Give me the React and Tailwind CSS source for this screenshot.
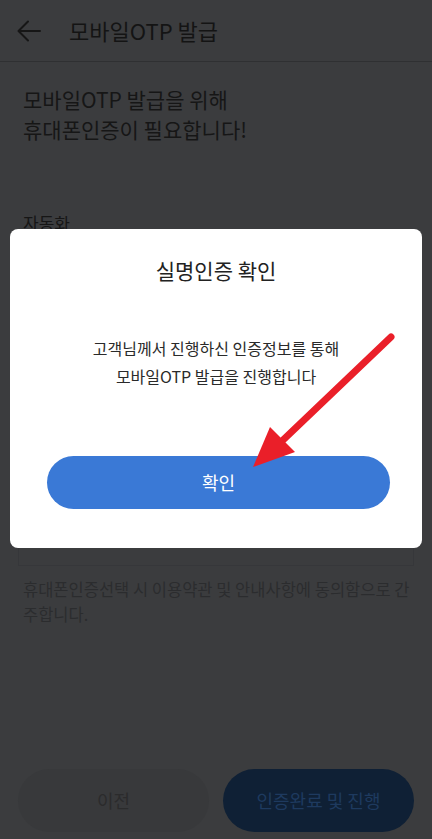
import React from "react";

const font = { fontFamily: '"Noto Sans CJK KR", "Noto Sans", sans-serif' };

function Header() {
  return (
    <div className="h-[62px] flex items-center border-b border-[#2f3032]">
      <svg
        width="26"
        height="26"
        viewBox="0 0 26 26"
        className="ml-[16px]"
        fill="none"
        stroke="#161616"
        strokeWidth="2"
        strokeLinecap="round"
        strokeLinejoin="round"
      >
        <path d="M24 13H2.5M12 3.5 2.5 13l9.5 9.5" />
      </svg>
      <h1 className="ml-[27px] text-[22px] text-[#141414]">모바일OTP 발급</h1>
    </div>
  );
}

function Modal() {
  return (
    <div className="absolute inset-0">
      <div className="mx-[10px] mt-[229px] bg-white rounded-[8px] flex flex-col items-center pt-[24px] pb-[39px]">
        <h2 className="text-[21px] leading-[34px] text-[#222]">실명인증 확인</h2>
        <p className="mt-[47px] text-[16px] leading-[28px] text-[#2a2a2a] text-center">
          고객님께서 진행하신 인증정보를 통해
          <br />
          모바일OTP 발급을 진행합니다
        </p>
        <button className="mt-[66px] self-stretch ml-[37px] mr-[32px] h-[53px] rounded-full bg-[#3a79d6] text-white text-[18px]">
          확인
        </button>
      </div>
      <svg
        className="absolute left-0 top-0"
        width="432"
        height="839"
        viewBox="0 0 432 839"
      >
        <line
          x1="391"
          y1="337"
          x2="282"
          y2="441"
          stroke="#ea1f29"
          strokeWidth="7"
          strokeLinecap="round"
        />
        <polygon points="253,467 270,427 295,452" fill="#ea1f29" />
      </svg>
    </div>
  );
}

export default function App() {
  return (
    <div
      className="relative w-[432px] h-[839px] bg-[#3b3c3e] overflow-hidden flex flex-col"
      style={font}
    >
      <Header />
      <div className="px-[23px] pt-[22px]">
        <p className="text-[21px] leading-[30px] text-[#161616]">
          모바일OTP 발급을 위해
          <br />
          휴대폰인증이 필요합니다!
        </p>
        <p className="mt-[67px] text-[17px] leading-[24px] text-[#161616]">
          자동화
        </p>
      </div>
      <div className="mx-[18px] mt-[311px] h-[20px] border border-[#36373a]" />
      <p className="px-[23px] mt-[11px] text-[16.5px] leading-[25px] text-[#2b2c2e] whitespace-nowrap">
        휴대폰인증선택 시 이용약관 및 안내사항에 동의함으로 간
        <br />
        주합니다.
      </p>
      <div className="mt-auto mb-[7px] px-[18px] flex gap-[14px]">
        <button className="flex-1 h-[63px] rounded-full bg-[#38393b] text-[18px] text-[#2b2b2c]">
          이전
        </button>
        <button className="flex-1 h-[63px] rounded-full bg-[#0f2035] text-[18px] text-[#1e3a5f]">
          인증완료 및 진행
        </button>
      </div>
      <Modal />
    </div>
  );
}
